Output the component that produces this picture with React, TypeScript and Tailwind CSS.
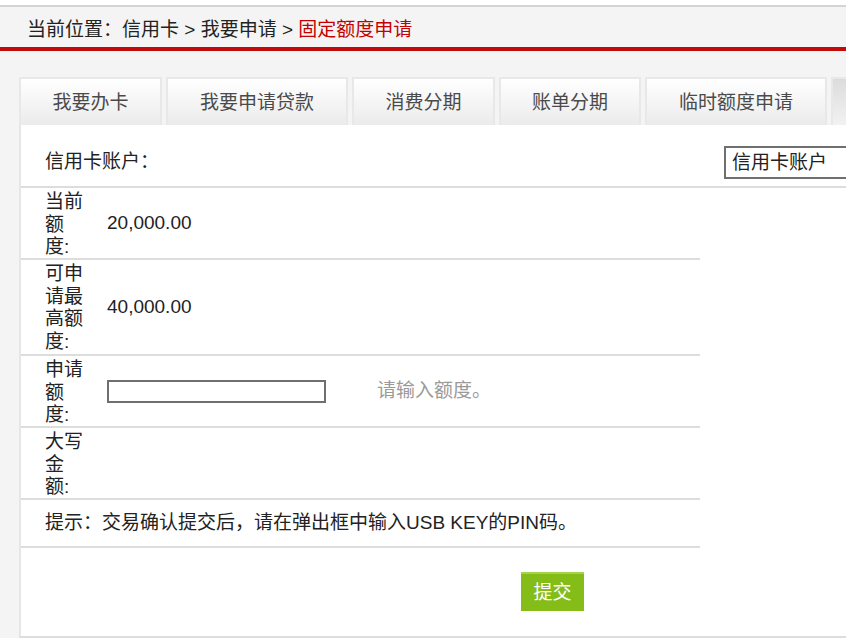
import React from "react";

const tabs = [
  { label: "我要办卡", w: "w-[143px]" },
  { label: "我要申请贷款", w: "w-[182px]" },
  { label: "消费分期", w: "w-[143px]" },
  { label: "账单分期", w: "w-[142px]" },
  { label: "临时额度申请", w: "w-[182px]" },
];

function Label({ children }: { children: React.ReactNode }) {
  return (
    <div className="w-[41px] shrink-0 self-start pt-[3px] leading-[22.6px] text-[#222]">
      {children}
    </div>
  );
}

export default function App() {
  return (
    <div
      className="w-[846px] h-[638px] overflow-hidden bg-white text-[19px] text-[#222]"
      style={{ fontFamily: '"Liberation Sans", "Noto Sans CJK SC", sans-serif' }}
    >
      {/* header */}
      <div className="h-[5px] bg-white" />
      <div className="h-[2px] bg-[#d4d4d4]" />
      <div className="h-[40px] bg-[#f3f4f3] flex items-center pl-[27px] pt-[6px] whitespace-nowrap">
        <span>当前位置：信用卡 &gt; 我要申请 &gt;&nbsp;</span>
        <span className="text-[#c40000]">固定额度申请</span>
      </div>
      <div className="h-[4px] bg-[#c20a0a]" />

      <div className="bg-[#f3f4f3] pt-[26px] pl-[19px]">
        {/* tabs */}
        <div className="flex gap-[4px] h-[48px] whitespace-nowrap">
          {tabs.map((t) => (
            <div
              key={t.label}
              className={`${t.w} shrink-0 border-2 border-b-0 border-[#e8e8e8] bg-gradient-to-b from-white to-[#ebebeb] flex items-center justify-center pt-[2px] text-[#4a4a4a]`}
            >
              {t.label}
            </div>
          ))}
          <div className="w-[140px] shrink-0 border-2 border-b-0 border-[#e8e8e8] bg-gradient-to-b from-[#dcdcdc] to-[#f2f2f2]" />
        </div>

        {/* panel */}
        <div className="w-[900px] bg-white border-l-2 border-[#e6e6e6] border-b-2 border-b-[#dddddd]">
          <div className="h-[63px] border-b-2 border-[#dddddd] flex items-center pt-[14px] pl-[24px]">
            <div className="w-[679px] shrink-0">信用卡账户：</div>
            <div className="w-[150px] h-[33px] border-2 border-[#6f6f6f] flex items-center pl-[6px] leading-none">
              信用卡账户
            </div>
          </div>

          <div className="w-[679px]">
            <div className="h-[72px] border-b-2 border-[#dddddd] flex items-center pl-[24px]">
              <Label>当前额度:</Label>
              <div className="ml-[21px]">20,000.00</div>
            </div>
            <div className="h-[96px] border-b-2 border-[#dddddd] flex items-center pl-[24px]">
              <Label>可申请最高额度:</Label>
              <div className="ml-[21px]">40,000.00</div>
            </div>
            <div className="h-[72px] border-b-2 border-[#dddddd] flex items-center pl-[24px]">
              <Label>申请额度:</Label>
              <div className="ml-[21px] w-[219px] h-[23px] border-2 border-[#6f6f6f]" />
              <div className="ml-[51px] text-[#9a9a9a]">请输入额度。</div>
            </div>
            <div className="h-[72px] border-b-2 border-[#dddddd] flex items-center pl-[24px]">
              <Label>大写金额:</Label>
            </div>
            <div className="h-[48px] border-b-2 border-[#dddddd] flex items-center pl-[24px] whitespace-nowrap">
              提示：交易确认提交后，请在弹出框中输入USB KEY的PIN码。
            </div>
            <div className="h-[88px] pt-[24px] pl-[500px]">
              <button className="w-[63px] h-[39px] bg-[#84bd18] border-t-2 border-[#a6d24c] text-white text-[19px] leading-none">
                提交
              </button>
            </div>
          </div>
        </div>
      </div>
    </div>
  );
}
